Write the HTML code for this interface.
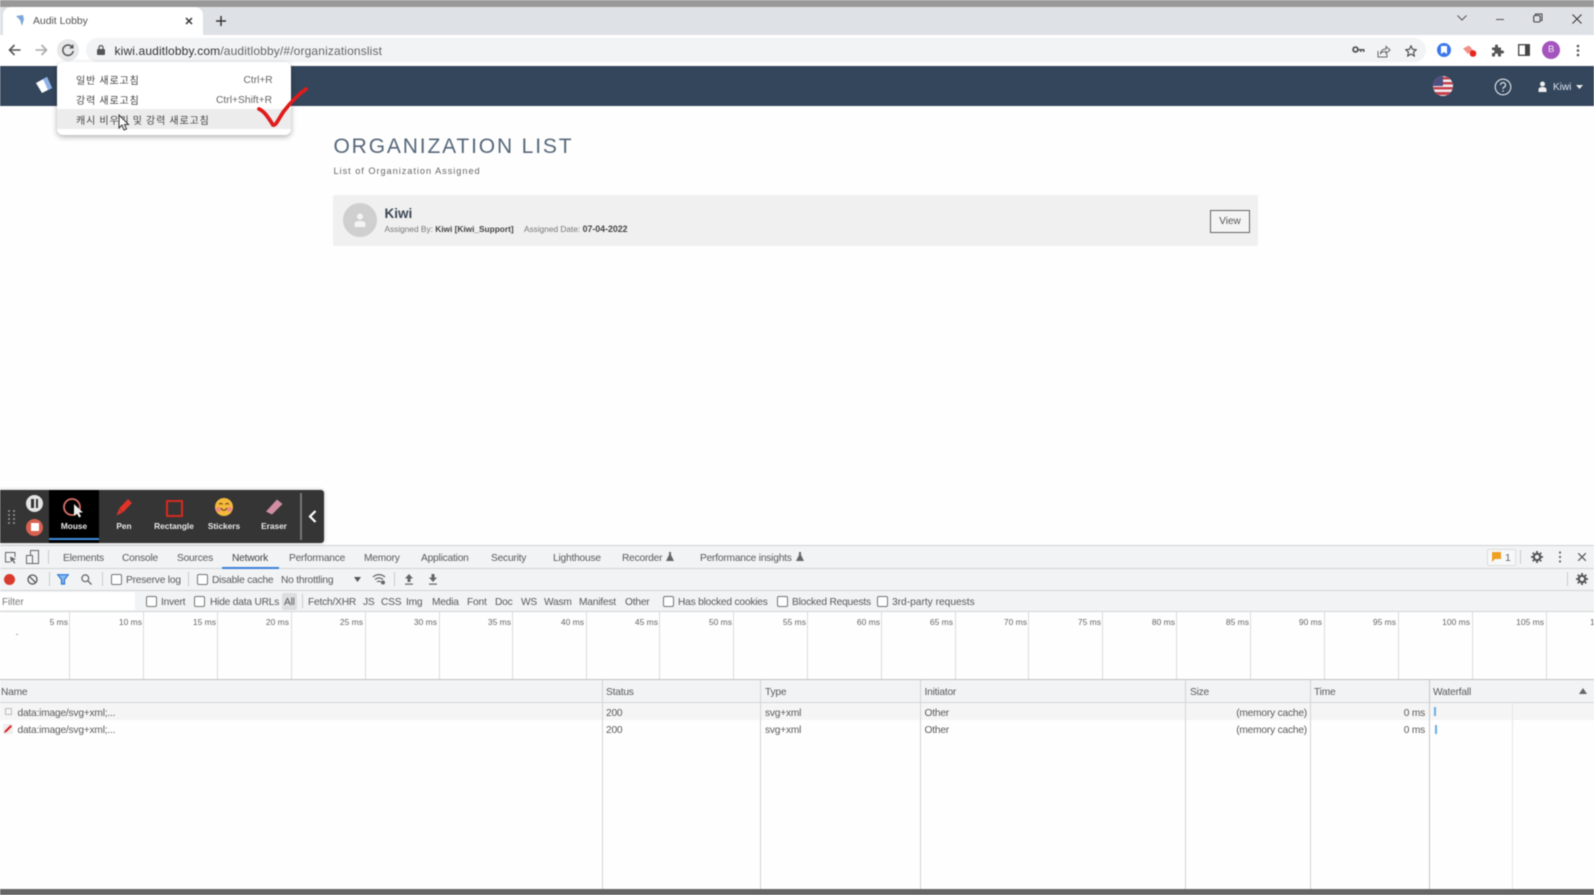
<!DOCTYPE html>
<html lang="en"><head><meta charset="utf-8"><title>Audit Lobby</title>
<style>
html,body{margin:0;padding:0;width:1594px;height:895px;overflow:hidden;background:#fff}
body{font-family:"Liberation Sans","Noto Sans CJK KR",sans-serif;color:#555}
#root{position:relative;width:1594px;height:895px;overflow:hidden;background:#fefefe;filter:blur(.4px)}
#root div,#root svg,#root span.t{position:absolute}
.b{position:absolute}
.t{white-space:nowrap;line-height:14px;font-size:10.2px;color:#5f6368}
.d{color:#5a5a5a;letter-spacing:-.2px}
.cb{width:9px;height:9px;border:1px solid #767676;border-radius:2px;background:#fff}
.r{text-align:right}
.l{text-align:right;width:60px;color:#666;font-size:8.500px}
.v{top:611px;width:1px;height:68px;background:#dcdcdc}
.c{top:680px;width:1px;height:209px;background:#d4d4d4}
.m{font-size:10px;color:#444;letter-spacing:.9px;font-family:"Noto Sans CJK KR","Liberation Sans",sans-serif}
.lb{font-size:8.3px;font-weight:bold;color:#e8e8e8;text-align:center;width:60px;top:519px}
</style></head><body>
<div id="root">
<!-- top -->
<div style="left:0;top:0;width:1594px;height:7px;background:#999"></div>
<div style="left:0;top:7px;width:1594px;height:28px;background:#dee1e6"></div>
<div style="left:3px;top:7px;width:200px;height:28px;background:#fff;border-radius:8px 8px 0 0"></div>
<svg style="left:14px;top:14px" width="12" height="14" viewBox="0 0 12 14"><path d="M2 2 L9 1 L10 5 L8 12 L6 6 Z" fill="#7ba7d8"/></svg>
<span class="t" style="left:33px;top:15px;font-size:10.4px;color:#555">Audit Lobby</span>
<svg style="left:185px;top:17px" width="8" height="8" viewBox="0 0 8 8"><path d="M1 1L7 7M7 1L1 7" stroke="#333" stroke-width="1.5"/></svg>
<svg style="left:216px;top:16px" width="10" height="10" viewBox="0 0 10 10"><path d="M5 0V10M0 5H10" stroke="#333" stroke-width="1.5"/></svg>
<svg style="left:1457px;top:15px" width="10" height="6" viewBox="0 0 10 6"><path d="M.5 .5L5 5L9.500 .5" stroke="#555" fill="none"/></svg>
<div style="left:1496px;top:18.500px;width:8px;height:1.500px;background:#555"></div>
<svg style="left:1533px;top:13px" width="10" height="10" viewBox="0 0 10 10"><rect x=".7" y="2.500" width="6.500" height="6.500" rx="1.500" fill="none" stroke="#444" stroke-width="1.100"/><path d="M2.500 2V1H9V7.500H8" fill="none" stroke="#444"/></svg>
<svg style="left:1572px;top:14px" width="10" height="10" viewBox="0 0 10 10"><path d="M.5 .5L9.500 9.500M9.500 .5L.5 9.500" stroke="#333" stroke-width="1"/></svg>
<!-- toolbar -->
<div style="left:0;top:35px;width:1594px;height:31px;background:#fff"></div>
<svg style="left:8px;top:44px" width="13" height="12" viewBox="0 0 13 12"><path d="M12.500 6H1.500M6.500 1L1.500 6L6.500 11" fill="none" stroke="#555" stroke-width="1.600"/></svg>
<svg style="left:35px;top:44px" width="13" height="12" viewBox="0 0 13 12"><path d="M.5 6H11.500M6.500 1L11.500 6L6.500 11" fill="none" stroke="#aaa" stroke-width="1.600"/></svg>
<div style="left:57px;top:39px;width:22px;height:22px;border-radius:50%;background:#e6e8ea"></div>
<svg style="left:61px;top:43px" width="14" height="14" viewBox="0 0 14 14"><path d="M11.500 4.500A5.200 5.200 0 1 0 12.200 8" fill="none" stroke="#555" stroke-width="1.500"/><path d="M12.500 1V5.500H8Z" fill="#555"/></svg>
<div style="left:86px;top:38px;width:1340px;height:24px;border-radius:12px;background:#f1f3f4"></div>
<svg style="left:97px;top:45px" width="8" height="10" viewBox="0 0 8 10"><rect y="4" width="8" height="6" rx="1" fill="#555"/><path d="M2 4.500V2.500a2 2 0 0 1 4 0V4.500" fill="none" stroke="#555" stroke-width="1.200"/></svg>
<span class="t" style="left:114.500px;top:44px;font-size:12px;color:#333;letter-spacing:.14px">kiwi.auditlobby.com<span style="color:#666">/auditlobby/#/organizationslist</span></span>
<svg style="left:1352px;top:46px" width="13" height="8" viewBox="0 0 13 8"><circle cx="3.500" cy="3.500" r="2.400" fill="none" stroke="#555" stroke-width="1.800"/><path d="M5.500 3H12.500V6H11V4.500H9.500V6H8V4.500H5.500Z" fill="#555"/></svg>
<svg style="left:1377px;top:44px" width="14" height="14" viewBox="0 0 14 14"><path d="M1 7V13H10V10" fill="none" stroke="#666"/><path d="M3.500 9.500C4 6.500 6 5 9 5V2.500L13 6L9 9.500V7.500C7 7.500 5 8 3.500 9.500Z" fill="none" stroke="#666"/></svg>
<svg style="left:1405px;top:45px" width="12" height="12" viewBox="0 0 12 12"><path d="M6 .8L7.600 4.300L11.300 4.700L8.500 7.200L9.300 11L6 9L2.700 11L3.500 7.200L.7 4.700L4.400 4.300Z" fill="none" stroke="#444" stroke-width="1.100"/></svg>
<div style="left:1437px;top:43px;width:14px;height:14px;border-radius:50%;background:#3c78ea"></div>
<svg style="left:1441px;top:46px" width="6" height="8" viewBox="0 0 6 8"><path d="M0 0H6V8L3 6L0 8Z" fill="#fff"/></svg>
<svg style="left:1463px;top:45px" width="15" height="13" viewBox="0 0 15 13"><path d="M0 3.500L6 .5L10 5L5 9Z" fill="#f08f88"/><circle cx="10" cy="8.500" r="3.300" fill="#e8261c"/></svg>
<svg style="left:1491px;top:44px" width="13" height="13" viewBox="0 0 13 13"><path d="M1 3.500H4V2a1.500 1.500 0 0 1 3 0V3.500H10V6.500H11.500a1.500 1.500 0 0 1 0 3H10V12.500H7V11a1.500 1.500 0 0 0-3 0V12.500H1V9H2a1.500 1.500 0 0 0 0-3H1Z" fill="#555"/></svg>
<svg style="left:1518px;top:44px" width="12" height="12" viewBox="0 0 12 12"><rect x=".7" y=".7" width="10.600" height="10.600" fill="none" stroke="#444" stroke-width="1.300"/><rect x="7" y="1" width="4" height="10" fill="#444"/></svg>
<div style="left:1542px;top:41px;width:18px;height:18px;border-radius:50%;background:#a553bf"></div>
<span class="t" style="left:1548px;top:43px;color:#eee;font-size:9.500px">B</span>
<svg style="left:1576px;top:44px" width="4" height="13" viewBox="0 0 4 13"><circle cx="2" cy="2" r="1.300" fill="#555"/><circle cx="2" cy="6.500" r="1.300" fill="#555"/><circle cx="2" cy="11" r="1.300" fill="#555"/></svg>
<!-- app header -->
<div style="left:0;top:66px;width:1594px;height:40px;background:#34465b"></div>
<svg style="left:34px;top:75px" width="20" height="20" viewBox="0 0 20 20"><path d="M2 8L13 2L18 13L8 18Z" fill="#fff"/><path d="M13 2L18 13L14 15L9 4Z" fill="#8db0e8"/></svg>
<svg style="left:1433px;top:76px" width="20" height="20" viewBox="0 0 20 20"><defs><clipPath id="fc"><circle cx="10" cy="10" r="10"/></clipPath></defs><g clip-path="url(#fc)"><rect width="20" height="20" fill="#eee"/><rect y="1" width="20" height="2.500" fill="#c9404f"/><rect y="6" width="20" height="2.500" fill="#c9404f"/><rect y="11" width="20" height="2.500" fill="#c9404f"/><rect y="16" width="20" height="3" fill="#c9404f"/><rect width="10" height="10" fill="#4d4f80"/></g></svg>
<svg style="left:1494px;top:78px" width="18" height="18" viewBox="0 0 18 18"><circle cx="9" cy="9" r="7.800" fill="none" stroke="#e6e9ee" stroke-width="1.100"/><path d="M6.500 7A2.500 2.500 0 1 1 9.500 9.500C9 9.800 9 10.300 9 11" fill="none" stroke="#e6e9ee" stroke-width="1.200"/><circle cx="9" cy="13" r=".8" fill="#e6e9ee"/></svg>
<svg style="left:1538px;top:81px" width="9" height="12" viewBox="0 0 9 12"><circle cx="4.500" cy="3" r="2.500" fill="#eee"/><path d="M.5 11V8.500C.5 7 2 6 4.500 6S8.500 7 8.500 8.500V11Z" fill="#eee"/></svg>
<span class="t" style="left:1553px;top:80.500px;color:#dfe4f0;font-size:10px">Kiwi</span>
<svg style="left:1576px;top:85px" width="7" height="4" viewBox="0 0 7 4"><path d="M0 0H7L3.500 4Z" fill="#eee"/></svg>
<!-- page -->
<span class="t" style="left:333.500px;top:135px;font-size:21px;line-height:24px;letter-spacing:1.850px;color:#56677a">ORGANIZATION LIST</span>
<span class="t" style="left:333.500px;top:164px;font-size:9.200px;letter-spacing:.97px;color:#666">List of Organization Assigned</span>
<div style="left:333px;top:195px;width:925px;height:51px;background:#f0f0f0;border-radius:2px"></div>
<div style="left:343px;top:203px;width:34px;height:34px;border-radius:50%;background:#cfcfcf"></div>
<svg style="left:353px;top:213px" width="14" height="15" viewBox="0 0 14 15"><circle cx="7" cy="3.500" r="3" fill="#f4f4f4"/><path d="M1.500 14V11C1.500 9 3.500 8 7 8S12.500 9 12.500 11V14Z" fill="#f4f4f4"/></svg>
<span class="t" style="left:384.500px;top:207px;font-size:13.500px;font-weight:bold;color:#3b4654">Kiwi</span>
<span class="t" style="left:384.500px;top:222px;font-size:8.300px;color:#777">Assigned By: <b style="color:#444">Kiwi [Kiwi_Support]</b></span>
<span class="t" style="left:524px;top:222px;font-size:8.300px;color:#777">Assigned Date: <b style="color:#444;font-size:8.800px">07-04-2022</b></span>
<div style="left:1210px;top:210px;width:38px;height:21px;border:1px solid #666;background:#f4f4f4;text-align:center;font-size:10px;line-height:21px;color:#555">View</div>
<!-- reload menu -->
<div style="left:57px;top:62px;width:234px;height:73px;background:#fff;border-radius:6px;box-shadow:0 2px 6px rgba(0,0,0,.3)"></div>
<div style="left:57px;top:109px;width:234px;height:20px;background:#ececec"></div>
<span class="t m" style="left:76px;top:72.500px">일반 새로고침</span>
<span class="t m" style="left:76px;top:92.500px">강력 새로고침</span>
<span class="t m" style="left:76px;top:112.500px">캐시 비우기 및 강력 새로고침</span>
<span class="t" style="left:243.500px;top:73.500px;font-size:10.200px;color:#666">Ctrl+R</span>
<span class="t" style="left:216px;top:93.500px;font-size:10.300px;color:#666">Ctrl+Shift+R</span>
<svg style="left:118px;top:114px" width="12" height="18" viewBox="0 0 12 18"><path d="M1 1V14L4 11L6 16L8.500 15L6.500 10.500H10.500Z" fill="#fff" stroke="#333" stroke-width="1"/></svg>
<svg style="left:255px;top:84px" width="56" height="48" viewBox="0 0 56 48"><path d="M4 25C9 27 13 33 18 41C21 42 24 34 29 27C36 18 44 10 51 5" fill="none" stroke="#df1c1c" stroke-width="3.800" stroke-linecap="round"/></svg>
<!-- devtools bars -->
<div style="left:0;top:545px;width:1594px;height:66px;background:#f1f3f4"></div>
<div style="left:0;top:545px;width:1594px;height:1px;background:#cfd1d3"></div>
<div style="left:0;top:568px;width:1594px;height:1px;background:#d2d4d6"></div>
<div style="left:0;top:590px;width:1594px;height:1px;background:#d2d4d6"></div>
<div style="left:0;top:611px;width:1594px;height:1px;background:#d2d4d6"></div>
<svg style="left:4px;top:551px" width="13" height="13" viewBox="0 0 13 13"><path d="M6 11H1.500V1.500H11V6" fill="none" stroke="#666"/><path d="M6 5.500L12 8L9.500 9L11.500 12L10 12.500L8.500 9.500L7 11.500Z" fill="#666"/></svg>
<svg style="left:26px;top:550px" width="13" height="14" viewBox="0 0 13 14"><rect x="4.500" y=".5" width="8" height="13" fill="none" stroke="#666"/><rect x=".5" y="5.500" width="6" height="8" fill="#f1f3f4" stroke="#666"/></svg>
<div style="left:48px;top:550px;width:1px;height:14px;background:#ccc"></div>
<span class="t d" style="left:63px;top:551.500px">Elements</span>
<span class="t d" style="left:122px;top:551.500px">Console</span>
<span class="t d" style="left:177px;top:551.500px">Sources</span>
<span class="t d" style="left:232px;top:551.500px;color:#444">Network</span>
<div style="left:222px;top:567px;width:57px;height:2px;background:#3b7fd9"></div>
<span class="t d" style="left:289px;top:551.500px">Performance</span>
<span class="t d" style="left:364px;top:551.500px">Memory</span>
<span class="t d" style="left:421px;top:551.500px">Application</span>
<span class="t d" style="left:491px;top:551.500px">Security</span>
<span class="t d" style="left:553px;top:551.500px">Lighthouse</span>
<span class="t d" style="left:622px;top:551.500px">Recorder</span>
<svg style="left:666px;top:552px" width="8" height="9" viewBox="0 0 8 9"><path d="M3 0H5V3L8 9H0L3 3Z" fill="#666"/></svg>
<span class="t d" style="left:700px;top:551.500px">Performance insights</span>
<svg style="left:796px;top:552px" width="8" height="9" viewBox="0 0 8 9"><path d="M3 0H5V3L8 9H0L3 3Z" fill="#666"/></svg>
<div style="left:1487px;top:549px;width:27px;height:15px;background:#f7f8f9;border:1px solid #ddd;border-radius:2px"></div>
<svg style="left:1492px;top:552px" width="9" height="10" viewBox="0 0 9 10"><path d="M0 0H9V7H3L0 10Z" fill="#f0a020"/></svg>
<span class="t" style="left:1505px;top:551px;font-size:10.500px">1</span>
<div style="left:1520px;top:550px;width:1px;height:14px;background:#ccc"></div>
<svg style="left:1531px;top:551px" width="12" height="12" viewBox="0 0 12 12"><circle cx="6" cy="6" r="3.200" fill="none" stroke="#555" stroke-width="2.200"/><path d="M6 0V2M6 10V12M0 6H2M10 6H12M1.700 1.700L3 3M9 9L10.300 10.300M1.700 10.300L3 9M9 3L10.300 1.700" stroke="#555" stroke-width="1.800"/></svg>
<svg style="left:1558px;top:551px" width="4" height="12" viewBox="0 0 4 12"><circle cx="2" cy="1.500" r="1.100" fill="#666"/><circle cx="2" cy="6" r="1.100" fill="#666"/><circle cx="2" cy="10.500" r="1.100" fill="#666"/></svg>
<svg style="left:1578px;top:553px" width="8" height="8" viewBox="0 0 8 8"><path d="M0 0L8 8M8 0L0 8" stroke="#555" stroke-width="1.200"/></svg>
<!-- row 2 -->
<div style="left:4px;top:574px;width:11px;height:11px;border-radius:50%;background:#d93a2e"></div>
<svg style="left:27px;top:574px" width="11" height="11" viewBox="0 0 11 11"><circle cx="5.500" cy="5.500" r="4.500" fill="none" stroke="#555" stroke-width="1.300"/><path d="M2.300 2.300L8.700 8.700" stroke="#555" stroke-width="1.300"/></svg>
<div style="left:49px;top:572px;width:1px;height:14px;background:#ccc"></div>
<svg style="left:57px;top:574px" width="12" height="11" viewBox="0 0 12 11"><path d="M.7 .7H11.300L7.500 5.500V10H4.500V5.500Z" fill="#8ab8ee" stroke="#2a78d6" stroke-width="1.200"/></svg>
<svg style="left:81px;top:574px" width="11" height="11" viewBox="0 0 11 11"><circle cx="4.300" cy="4.300" r="3.400" fill="none" stroke="#666" stroke-width="1.200"/><path d="M6.800 6.800L10.500 10.500" stroke="#666" stroke-width="1.300"/></svg>
<div style="left:102px;top:572px;width:1px;height:14px;background:#ccc"></div>
<div class="cb" style="left:111px;top:574px"></div>
<span class="t d" style="left:126px;top:574px">Preserve log</span>
<div style="left:188px;top:572px;width:1px;height:14px;background:#ccc"></div>
<div class="cb" style="left:197px;top:574px"></div>
<span class="t d" style="left:212px;top:574px">Disable cache</span>
<span class="t d" style="left:281px;top:574px">No throttling</span>
<svg style="left:354px;top:577px" width="7" height="5" viewBox="0 0 7 5"><path d="M0 0H7L3.500 5Z" fill="#555"/></svg>
<svg style="left:372px;top:573px" width="14" height="12" viewBox="0 0 14 12"><path d="M1 4C4.500 .8 9.500 .8 13 4M3 6.500C5.500 4.500 8.500 4.500 11 6.500M5 9C6 8 8 8 9 9" fill="none" stroke="#666" stroke-width="1.200"/><circle cx="11" cy="9.500" r="2" fill="#666"/></svg>
<div style="left:394px;top:572px;width:1px;height:14px;background:#ccc"></div>
<svg style="left:404px;top:574px" width="10" height="11" viewBox="0 0 10 11"><path d="M5 0L9 4.500H6.500V8H3.500V4.500H1Z" fill="#666"/><rect x="1" y="9.500" width="8" height="1.200" fill="#666"/></svg>
<svg style="left:428px;top:574px" width="10" height="11" viewBox="0 0 10 11"><path d="M5 8L9 3.500H6.500V0H3.500V3.500H1Z" fill="#666"/><rect x="1" y="9.500" width="8" height="1.200" fill="#666"/></svg>
<div style="left:1567px;top:572px;width:1px;height:14px;background:#ccc"></div>
<svg style="left:1576px;top:573px" width="12" height="12" viewBox="0 0 12 12"><circle cx="6" cy="6" r="3.200" fill="none" stroke="#555" stroke-width="2.200"/><path d="M6 0V2M6 10V12M0 6H2M10 6H12M1.700 1.700L3 3M9 9L10.300 10.300M1.700 10.300L3 9M9 3L10.300 1.700" stroke="#555" stroke-width="1.800"/></svg>
<!-- row 3 -->
<div style="left:0;top:592px;width:135px;height:18px;background:#fff"></div>
<span class="t" style="left:2px;top:596px;font-size:9.800px;color:#777">Filter</span>
<div class="cb" style="left:146px;top:595.500px"></div>
<span class="t d" style="left:161px;top:595.500px">Invert</span>
<div class="cb" style="left:194px;top:595.500px"></div>
<span class="t d" style="left:210px;top:595.500px">Hide data URLs</span>
<div style="left:282px;top:593px;width:15px;height:17px;background:#dcdee0;border-radius:2px"></div>
<span class="t d" style="left:284px;top:595.500px">All</span>
<div style="left:302px;top:594px;width:1px;height:14px;background:#ccc"></div>
<span class="t d" style="left:308px;top:595.500px">Fetch/XHR</span>
<span class="t d" style="left:363px;top:595.500px">JS</span>
<span class="t d" style="left:381px;top:595.500px">CSS</span>
<span class="t d" style="left:406px;top:595.500px">Img</span>
<span class="t d" style="left:432px;top:595.500px">Media</span>
<span class="t d" style="left:467px;top:595.500px">Font</span>
<span class="t d" style="left:495px;top:595.500px">Doc</span>
<span class="t d" style="left:521px;top:595.500px">WS</span>
<span class="t d" style="left:544px;top:595.500px">Wasm</span>
<span class="t d" style="left:579px;top:595.500px">Manifest</span>
<span class="t d" style="left:625px;top:595.500px">Other</span>
<div class="cb" style="left:663px;top:595.500px"></div>
<span class="t d" style="left:678px;top:595.500px">Has blocked cookies</span>
<div class="cb" style="left:777px;top:595.500px"></div>
<span class="t d" style="left:792px;top:595.500px">Blocked Requests</span>
<div class="cb" style="left:877px;top:595.500px"></div>
<span class="t d" style="left:892px;top:595.500px;letter-spacing:0">3rd-party requests</span>
<!-- timeline -->
<div class="v" style="left:69px"></div><div class="v" style="left:143px"></div><div class="v" style="left:217px"></div><div class="v" style="left:291px"></div><div class="v" style="left:365px"></div><div class="v" style="left:439px"></div><div class="v" style="left:512px"></div><div class="v" style="left:586px"></div><div class="v" style="left:659px"></div><div class="v" style="left:733px"></div><div class="v" style="left:807px"></div><div class="v" style="left:881px"></div><div class="v" style="left:955px"></div><div class="v" style="left:1028px"></div><div class="v" style="left:1102px"></div><div class="v" style="left:1176px"></div><div class="v" style="left:1250px"></div><div class="v" style="left:1324px"></div><div class="v" style="left:1398px"></div><div class="v" style="left:1472px"></div><div class="v" style="left:1546px"></div>
<span class="t l" style="left:8px;top:615px">5 ms</span><span class="t l" style="left:82px;top:615px">10 ms</span><span class="t l" style="left:156px;top:615px">15 ms</span><span class="t l" style="left:229px;top:615px">20 ms</span><span class="t l" style="left:303px;top:615px">25 ms</span><span class="t l" style="left:377px;top:615px">30 ms</span><span class="t l" style="left:451px;top:615px">35 ms</span><span class="t l" style="left:524px;top:615px">40 ms</span><span class="t l" style="left:598px;top:615px">45 ms</span><span class="t l" style="left:672px;top:615px">50 ms</span><span class="t l" style="left:746px;top:615px">55 ms</span><span class="t l" style="left:820px;top:615px">60 ms</span><span class="t l" style="left:893px;top:615px">65 ms</span><span class="t l" style="left:967px;top:615px">70 ms</span><span class="t l" style="left:1041px;top:615px">75 ms</span><span class="t l" style="left:1115px;top:615px">80 ms</span><span class="t l" style="left:1189px;top:615px">85 ms</span><span class="t l" style="left:1262px;top:615px">90 ms</span><span class="t l" style="left:1336px;top:615px">95 ms</span><span class="t l" style="left:1410px;top:615px">100 ms</span><span class="t l" style="left:1484px;top:615px">105 ms</span>
<span class="t" style="left:1590px;top:615px;font-size:8.500px;color:#666">110 ms</span>
<div style="left:16px;top:634px;width:2px;height:1px;background:#aaa"></div>
<!-- table -->
<div style="left:0;top:679px;width:1594px;height:1px;background:#bfc1c3"></div>
<div style="left:0;top:680px;width:1594px;height:22px;background:#f1f3f4"></div>
<div style="left:0;top:702px;width:1594px;height:1px;background:#d4d6d8"></div>
<div style="left:0;top:703px;width:1594px;height:17px;background:#f5f5f5"></div>
<div class="c" style="left:602px"></div><div class="c" style="left:760px"></div><div class="c" style="left:920px"></div><div class="c" style="left:1185px"></div><div class="c" style="left:1310px"></div>
<div class="c" style="left:1428.500px;width:1.500px;background:#c8c8c8"></div>
<div class="c" style="left:1512px;top:703px;height:186px;background:#e6e6e6"></div>
<span class="t d" style="left:1px;top:686px">Name</span>
<span class="t d" style="left:606px;top:686px">Status</span>
<span class="t d" style="left:765px;top:686px">Type</span>
<span class="t d" style="left:924.500px;top:686px">Initiator</span>
<span class="t d" style="left:1190px;top:686px">Size</span>
<span class="t d" style="left:1314px;top:686px">Time</span>
<span class="t d" style="left:1433px;top:686px">Waterfall</span>
<svg style="left:1579px;top:688px" width="8" height="6" viewBox="0 0 8 6"><path d="M4 0L8 6H0Z" fill="#666"/></svg>
<div style="left:5px;top:708px;width:5px;height:5px;border:1px solid #bbb"></div>
<svg style="left:3px;top:724px" width="10" height="10" viewBox="0 0 10 10"><rect width="10" height="10" fill="#eee"/><path d="M1 9L2 6.500L7.500 1L9 2.500L3.500 8Z" fill="#dd2222"/></svg>
<span class="t d" style="left:17.500px;top:707px">data:image/svg+xml;...</span>
<span class="t d" style="left:17.500px;top:724px">data:image/svg+xml;...</span>
<span class="t d" style="left:606px;top:707px">200</span><span class="t d" style="left:606px;top:724px">200</span>
<span class="t d" style="left:765px;top:707px">svg+xml</span><span class="t d" style="left:765px;top:724px">svg+xml</span>
<span class="t d" style="left:924.500px;top:707px">Other</span><span class="t d" style="left:924.500px;top:724px">Other</span>
<span class="t d r" style="left:1207px;width:100px;top:707px">(memory cache)</span><span class="t d r" style="left:1207px;width:100px;top:724px">(memory cache)</span>
<span class="t d r" style="left:1375px;width:50px;top:707px">0 ms</span><span class="t d r" style="left:1375px;width:50px;top:724px">0 ms</span>
<div style="left:1433.500px;top:707px;width:2px;height:9px;background:#68aee6"></div>
<div style="left:1434.500px;top:725px;width:2px;height:9px;background:#68aee6"></div>
<div style="left:0;top:889px;width:1594px;height:6px;background:#666"></div>
<!-- recorder -->
<div style="left:0;top:490px;width:324px;height:53px;background:#353535;border-radius:0 3px 3px 0;box-shadow:0 0 3px rgba(0,0,0,.3)"></div>
<div style="left:49px;top:490px;width:50px;height:53px;background:#000"></div>
<div style="left:49px;top:538px;width:50px;height:2px;background:#3f8fe0"></div>
<svg style="left:8px;top:510px" width="7" height="14" viewBox="0 0 7 14"><g fill="#999"><circle cx="1" cy="1" r="1"/><circle cx="6" cy="1" r="1"/><circle cx="1" cy="5" r="1"/><circle cx="6" cy="5" r="1"/><circle cx="1" cy="9" r="1"/><circle cx="6" cy="9" r="1"/><circle cx="1" cy="13" r="1"/><circle cx="6" cy="13" r="1"/></g></svg>
<div style="left:26px;top:495px;width:17px;height:17px;border-radius:50%;background:#e4e4e4"></div>
<div style="left:31px;top:499px;width:2.500px;height:9px;background:#333"></div>
<div style="left:35.500px;top:499px;width:2.500px;height:9px;background:#333"></div>
<div style="left:26px;top:518.500px;width:17px;height:17px;border-radius:50%;background:#d9614f"></div>
<div style="left:30.500px;top:523px;width:8px;height:8px;background:#fff"></div>
<svg style="left:62px;top:497px" width="24" height="22" viewBox="0 0 24 22"><circle cx="10" cy="10" r="8" fill="none" stroke="#d9706a" stroke-width="1.800"/><path d="M12 7V19L15 16.500L17 20.500L19 19.500L17 15.500H21Z" fill="#eee"/></svg>
<svg style="left:116px;top:498px" width="17" height="19" viewBox="0 0 17 19"><path d="M12 1L16 5L7 14.500L3 10.500Z" fill="#e0332a"/><path d="M3 11L6.500 14.500L.5 17.500Z" fill="#e0332a"/></svg>
<div style="left:166px;top:500px;width:13px;height:13px;border:2px solid #d62a1e"></div>
<div style="left:215px;top:498px;width:18px;height:18px;border-radius:50%;background:#f4b93a"></div>
<div style="left:216px;top:507px;width:5px;height:5px;border-radius:50%;background:#f08a8a"></div>
<div style="left:227px;top:507px;width:5px;height:5px;border-radius:50%;background:#f08a8a"></div>
<svg style="left:219px;top:502px" width="10" height="10" viewBox="0 0 10 10"><path d="M0 2.500C1 1 2.500 1 3.500 2.500M6.500 2.500C7.500 1 9 1 10 2.500M2 6C3.500 9 6.500 9 8 6" fill="none" stroke="#5a3a10" stroke-width="1"/></svg>
<svg style="left:264px;top:499px" width="19" height="17" viewBox="0 0 19 17"><path d="M13 .5L18.500 5L8 15.500L2 12.500Z" fill="#d08ea2"/></svg>
<span class="t lb" style="left:44px">Mouse</span><span class="t lb" style="left:94px">Pen</span><span class="t lb" style="left:144px">Rectangle</span><span class="t lb" style="left:194px">Stickers</span><span class="t lb" style="left:244px">Eraser</span>
<div style="left:300px;top:493px;width:1.500px;height:47px;background:#777"></div>
<svg style="left:308px;top:510px" width="9" height="13" viewBox="0 0 9 13"><path d="M7.500 1L2 6.500L7.500 12" fill="none" stroke="#fff" stroke-width="2.200"/></svg>
</div>
</body></html>
